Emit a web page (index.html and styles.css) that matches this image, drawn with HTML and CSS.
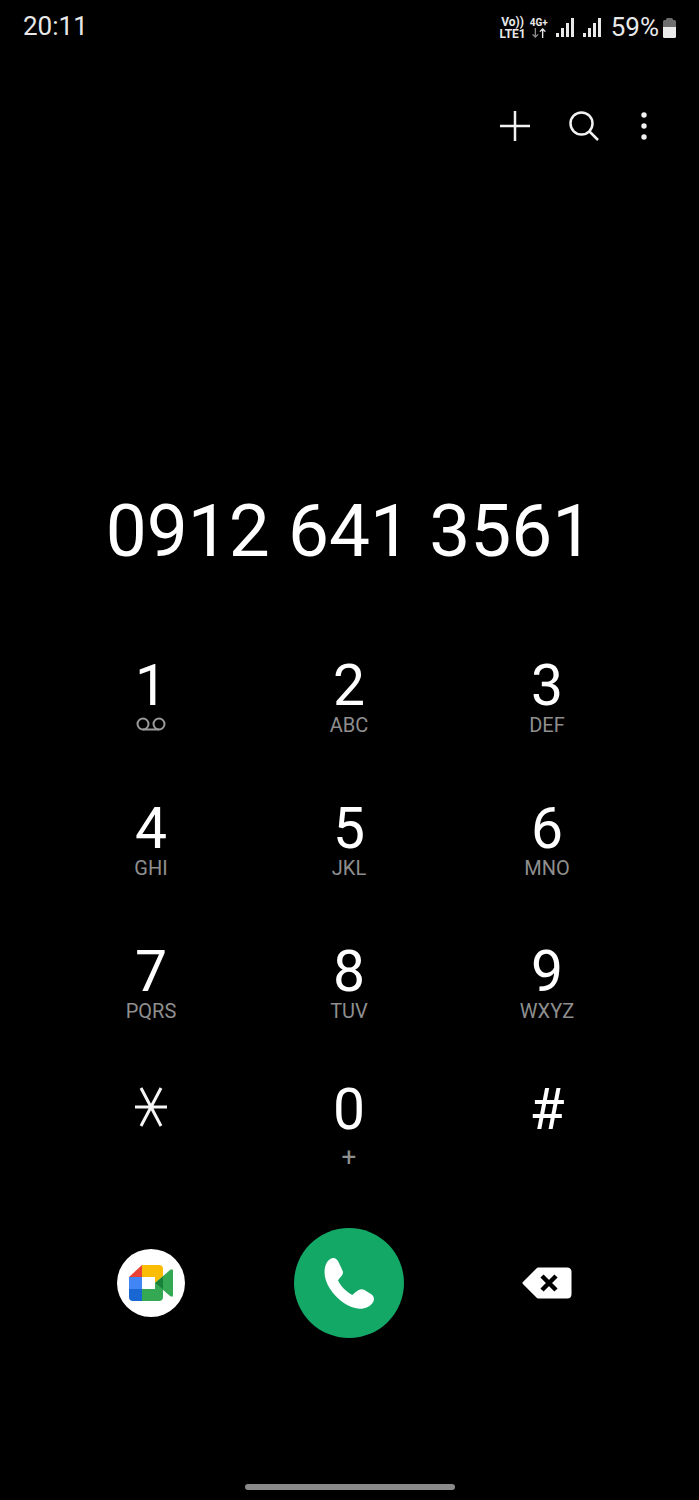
FILE: index.html
```html
<!DOCTYPE html>
<html lang="en">
<head>
    <meta charset="UTF-8">
    <meta name="viewport" content="width=device-width, initial-scale=1.0">
    <title>Phone</title>
    <link rel="stylesheet" href="styles.css">
</head>
<body>
    <div class="phone">
        <div class="status-bar">
            <span class="time">20:11</span>
            <div class="status-icons">
                <div class="net-text net-large">
                    <span>Vo))</span>
                    <span>LTE1</span>
                </div>
                <div class="net-text">
                    <span>4G+</span>
                    <svg width="16" height="10" viewBox="0 0 16 11">
                        <path d="M4 0V10M1 7L4 10L7 7" fill="none" stroke="#8a8a8a" stroke-width="1.5"/>
                        <path d="M12 11V1M9 4L12 1L15 4" fill="none" stroke="#e8e8e8" stroke-width="1.5"/>
                    </svg>
                </div>
                <svg class="signal" width="19" height="21" viewBox="0 0 19 21">
                    <rect x="0" y="16" width="3" height="4" fill="#e8e8e8"/>
                    <rect x="5" y="11" width="3" height="9" fill="#e8e8e8"/>
                    <rect x="10" y="6" width="3" height="14" fill="#e8e8e8"/>
                    <rect x="15" y="1" width="3" height="19" fill="#e8e8e8"/>
                </svg>
                <svg class="signal" width="19" height="21" viewBox="0 0 19 21">
                    <rect x="0" y="16" width="3" height="4" fill="#e8e8e8"/>
                    <rect x="5" y="11" width="3" height="9" fill="#e8e8e8"/>
                    <rect x="10" y="6" width="3" height="14" fill="#e8e8e8"/>
                    <rect x="15" y="1" width="3" height="19" fill="#e8e8e8"/>
                </svg>
                <span class="percent">59%</span>
                <svg width="15" height="22" viewBox="0 0 15 22">
                    <path d="M4 2.500Q4 1 5.500 1H9.500Q11 1 11 2.500V3H12.500Q14 3 14 4.500V10H1V4.500Q1 3 2.500 3H4Z" fill="#6e6e6e"/>
                    <path d="M1 10H14V19.500Q14 21 12.500 21H2.500Q1 21 1 19.500Z" fill="#ececec"/>
                </svg>
            </div>
        </div>

        <div class="toolbar">
            <svg width="34" height="34" viewBox="0 0 34 34">
                <path d="M17 2V32M2 17H32" stroke="#f2f2f2" stroke-width="2.500" fill="none"/>
            </svg>
            <svg class="search" width="32" height="32" viewBox="0 0 32 32">
                <circle cx="13.500" cy="13.500" r="11" stroke="#f2f2f2" stroke-width="2.500" fill="none"/>
                <path d="M21.500 21.500L30 30" stroke="#f2f2f2" stroke-width="2.500" fill="none"/>
            </svg>
            <svg width="10" height="30" viewBox="0 0 10 30">
                <circle cx="5" cy="4" r="2.700" fill="#f2f2f2"/>
                <circle cx="5" cy="15" r="2.700" fill="#f2f2f2"/>
                <circle cx="5" cy="26" r="2.700" fill="#f2f2f2"/>
            </svg>
        </div>

        <div class="number">0912 641 3561</div>

        <div class="keypad">
            <div class="key">
                <span class="digit">1</span>
                <svg class="voicemail" width="32" height="14" viewBox="0 0 32 14">
                    <circle cx="8" cy="7" r="5.500" fill="none" stroke="#9a9a9a" stroke-width="2"/>
                    <circle cx="24" cy="7" r="5.500" fill="none" stroke="#9a9a9a" stroke-width="2"/>
                    <path d="M8 12.500H24" stroke="#9a9a9a" stroke-width="2"/>
                </svg>
            </div>
            <div class="key"><span class="digit">2</span><span class="letters">ABC</span></div>
            <div class="key"><span class="digit">3</span><span class="letters">DEF</span></div>
            <div class="key"><span class="digit">4</span><span class="letters">GHI</span></div>
            <div class="key"><span class="digit">5</span><span class="letters">JKL</span></div>
            <div class="key"><span class="digit">6</span><span class="letters">MNO</span></div>
            <div class="key"><span class="digit">7</span><span class="letters">PQRS</span></div>
            <div class="key"><span class="digit">8</span><span class="letters">TUV</span></div>
            <div class="key"><span class="digit">9</span><span class="letters">WXYZ</span></div>
            <div class="key last-row">
                <svg class="star" width="36" height="42" viewBox="0 0 36 42">
                    <path d="M2 21H34M8 2L28 40M28 2L8 40" stroke="#f5f5f5" stroke-width="3" fill="none"/>
                </svg>
            </div>
            <div class="key last-row"><span class="digit">0</span><span class="letters plus">+</span></div>
            <div class="key last-row"><span class="digit">#</span></div>
        </div>

        <div class="actions">
            <div class="action">
                <div class="meet">
                    <svg width="44" height="36" viewBox="0 0 44 36">
                        <path d="M13 0H30Q34 0 34 4V11.800L26 18V12H13Z" fill="#fbbc04"/>
                        <path d="M13 0V12H0Z" fill="#ea4335"/>
                        <path d="M0 12H13V24H0Z" fill="#4285f4"/>
                        <path d="M0 24H13V36H4Q0 36 0 32Z" fill="#1967d2"/>
                        <path d="M13 24H26V18L34 24.200V32Q34 36 30 36H13Z" fill="#34a853"/>
                        <path d="M26 18L41 5Q44 3 44 6V30Q44 33 41 31Z" fill="#34a853"/>
                        <path d="M26 18L34 11.800V24.200Z" fill="#188038"/>
                    </svg>
                </div>
            </div>
            <div class="action">
                <div class="call">
                    <svg class="handset" width="52" height="52" viewBox="115 110 156 156">
                        <path d="M120 148C122 128 134 113 146 113C153 113 158 118 162 126L174 152C177 160 172 166 166 172L160 180C167 197 186 216 203 224L213 215C222 208 229 204 238 208L260 222C268 228 270 236 266 244C258 258 240 266 224 265C190 262 155 236 136 205C124 186 118 168 120 148Z" fill="#ffffff"/>
                    </svg>
                </div>
            </div>
            <div class="action">
                <svg width="50" height="32" viewBox="0 0 50 32">
                    <path d="M16 2H45Q48 2 48 5V27Q48 30 45 30H16L2 16Z" fill="#ffffff" stroke="#ffffff" stroke-width="3" stroke-linejoin="round"/>
                    <path d="M20 9L34 23M34 9L20 23" stroke="#000000" stroke-width="4.500" fill="none"/>
                </svg>
            </div>
        </div>

        <div class="home-bar"></div>
    </div>
</body>
</html>
```

FILE: styles.css
```css
* {
    box-sizing: border-box;
}

body {
    margin: 0;
    background-color: #000;
    font-family: Roboto, "Liberation Sans", sans-serif;
    color: #fff;
}

.phone {
    width: 699px;
    height: 1500px;
    overflow: hidden;
    display: flex;
    flex-direction: column;
}

/* Barre d'etat */
.status-bar {
    height: 52px;
    padding: 12px 23px 0 23px;
    display: flex;
    justify-content: space-between;
    align-items: flex-start;
    color: #e8e8e8;
}

.time {
    font-size: 26px;
    line-height: 29px;
}

.status-icons {
    display: flex;
    align-items: center;
    height: 31px;
    margin-right: -1px;
}

.net-text {
    display: flex;
    flex-direction: column;
    align-items: center;
    font-size: 10px;
    font-weight: 700;
    line-height: 10px;
    margin-right: 8px;
}

.net-large {
    font-size: 12px;
    line-height: 12px;
    margin-right: 4px;
}

.signal {
    margin-right: 8px;
}

.percent {
    font-size: 26px;
    line-height: 29px;
    margin-left: 1px;
    margin-right: 3px;
}

/* Actions du haut */
.toolbar {
    height: 60px;
    margin-top: 44px;
    padding-right: 50px;
    display: flex;
    justify-content: flex-end;
    align-items: center;
    gap: 36px;
}

.search {
    margin-right: 3px;
}

/* Numero compose */
.number {
    margin-top: 333px;
    height: 84px;
    font-size: 73px;
    line-height: 84px;
    text-align: center;
    white-space: nowrap;
}

/* Clavier */
.keypad {
    margin-top: 81px;
    padding: 0 52px;
    display: grid;
    grid-template-columns: repeat(3, 198px);
    grid-auto-rows: 143px;
}

.key {
    padding-top: 2px;
    display: flex;
    flex-direction: column;
    align-items: center;
}

.digit {
    font-size: 57px;
    line-height: 60px;
    height: 58px;
}

.letters {
    font-size: 20px;
    line-height: 22px;
    color: #8f8f8f;
}

.plus {
    font-size: 26px;
    line-height: 30px;
    margin-top: 4px;
}

.voicemail {
    margin-top: 3px;
}

.last-row {
    margin-top: -5px;
}

.star {
    margin-top: 6px;
}

/* Rangee du bas */
.actions {
    margin-top: 2px;
    padding: 0 52px;
    display: grid;
    grid-template-columns: repeat(3, 198px);
    height: 110px;
}

.action {
    display: flex;
    justify-content: center;
    align-items: center;
}

.meet {
    width: 68px;
    height: 68px;
    border-radius: 50%;
    background-color: #fff;
    display: flex;
    justify-content: center;
    align-items: center;
}

.call {
    width: 110px;
    height: 110px;
    border-radius: 50%;
    background-color: #14a867;
    display: flex;
    justify-content: center;
    align-items: center;
}

.home-bar {
    width: 210px;
    height: 6px;
    margin: 146px auto 0;
    border-radius: 3px;
    background-color: #8a8a8a;
}
```
